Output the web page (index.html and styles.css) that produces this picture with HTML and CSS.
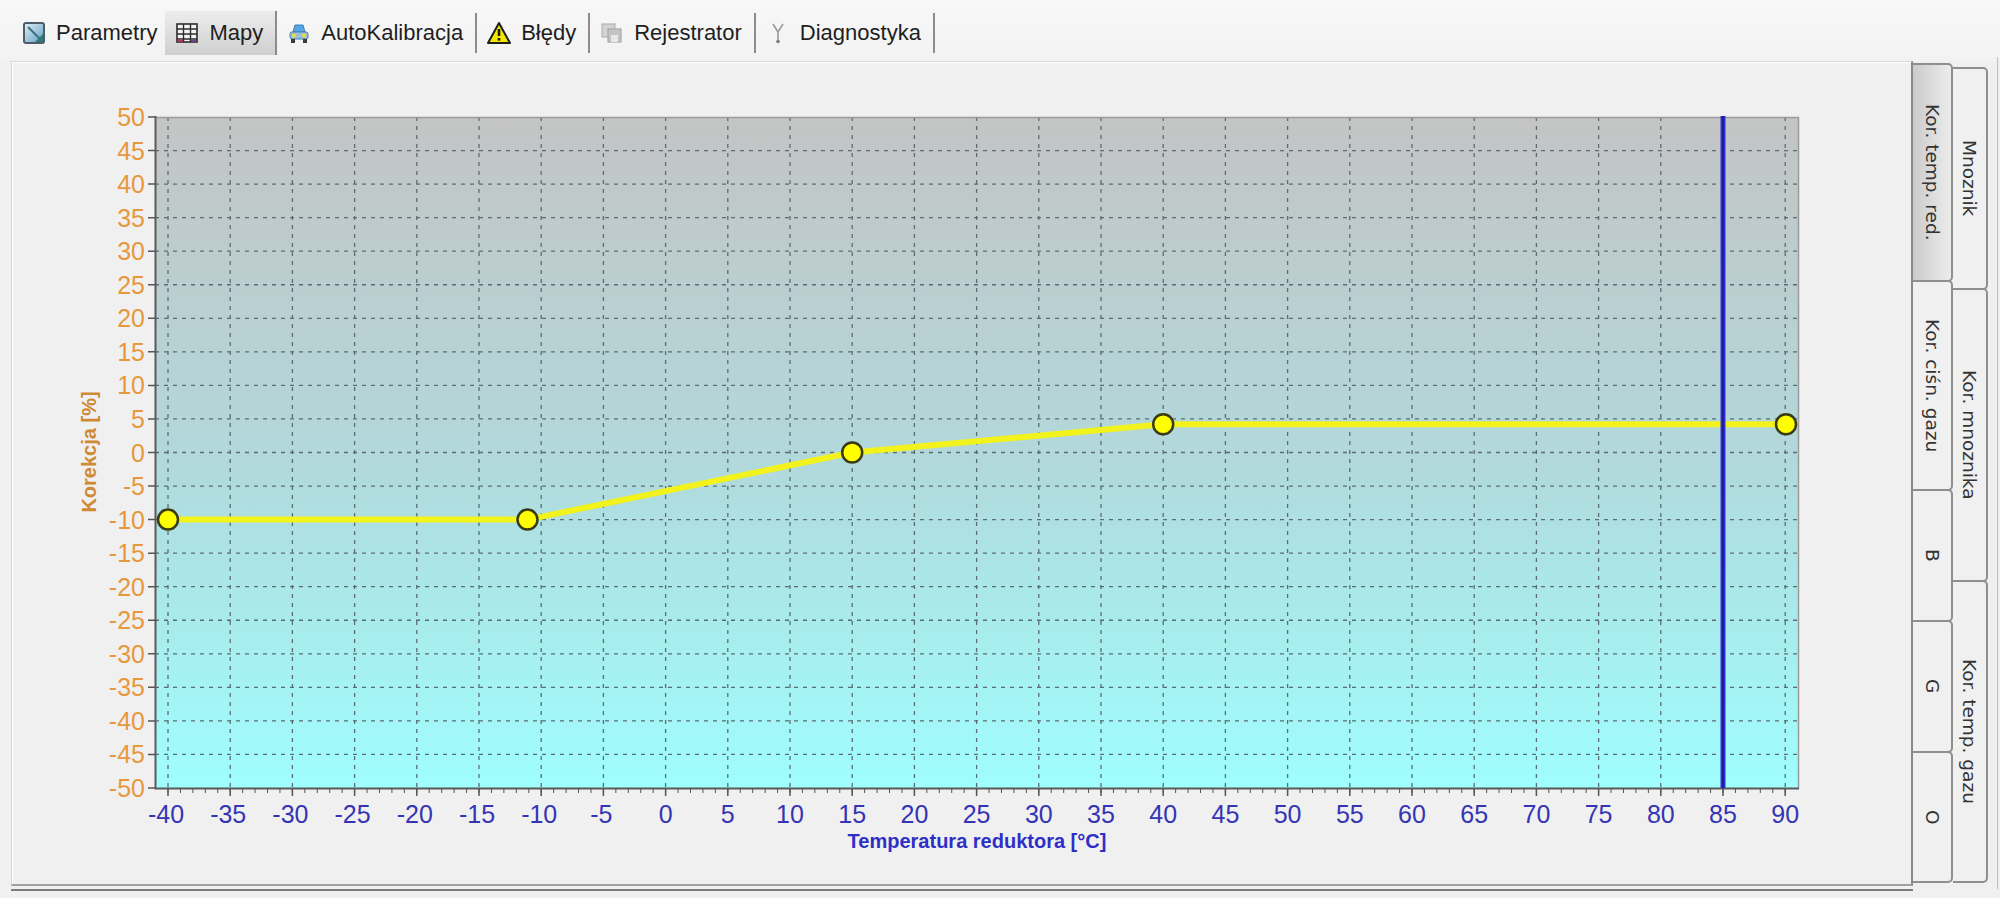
FILE: index.html
```html
<!DOCTYPE html>
<html lang="pl">
<head>
<meta charset="utf-8">
<title>Mapy</title>
<link rel="stylesheet" href="styles.css">
</head>
<body>
<div class="tabbar">
  <div class="tab first">
    <svg viewBox="0 0 24 24"><defs><linearGradient id="gp" x1="0" y1="0" x2="1" y2="1"><stop offset="0" stop-color="#e2f1f8"/><stop offset="1" stop-color="#5d9fbf"/></linearGradient></defs><rect x="2" y="2" width="20" height="20" rx="2" fill="url(#gp)" stroke="#4a5d69" stroke-width="2"/><path d="M13 21 L21 13 L21 21 Z" fill="#2f7c78"/><path d="M6 6 L18 18" stroke="#3e6e7e" stroke-width="2"/></svg>
    <span>Parametry</span>
  </div>
  <div class="tab active">
    <svg viewBox="0 0 24 24"><rect x="2" y="3" width="20" height="18" fill="#f4f4f4" stroke="#2c2c2c" stroke-width="1.6"/><path d="M2 8H22M2 13H22M2 18H22M8.5 3V21M15.5 3V21" stroke="#2c2c2c" stroke-width="1.4"/><rect x="3" y="18.5" width="5" height="2" fill="#c0306a"/><rect x="16" y="18.5" width="5" height="2" fill="#7040a0"/></svg>
    <span>Mapy</span>
  </div>
  <div class="tab">
    <svg viewBox="0 0 24 24"><path d="M6 11 L8 4 H16 L18 11 Z" fill="#56a6e6" stroke="#3a7cb8" stroke-width="1"/><rect x="3" y="11" width="18" height="7" rx="2" fill="#9cc0d8" stroke="#4a7ea8" stroke-width="1"/><circle cx="7" cy="14.5" r="2" fill="#e8e030"/><circle cx="17" cy="14.5" r="2" fill="#e8e030"/><rect x="4" y="18" width="4" height="4" fill="#3a3a3a"/><rect x="16" y="18" width="4" height="4" fill="#3a3a3a"/></svg>
    <span>AutoKalibracja</span>
  </div>
  <div class="tab">
    <svg viewBox="0 0 24 24"><path d="M12 2 L23 22 H1 Z" fill="#f3e600" stroke="#1e1e1e" stroke-width="2" stroke-linejoin="round"/><path d="M12 8 V15" stroke="#1e1e1e" stroke-width="2.6"/><rect x="10.7" y="17" width="2.6" height="2.6" fill="#1e1e1e"/></svg>
    <span>Błędy</span>
  </div>
  <div class="tab">
    <svg viewBox="0 0 24 24"><rect x="2" y="3" width="13" height="13" fill="#d2d2d2" stroke="#b4b4b4" stroke-width="1.2"/><rect x="8" y="8" width="13" height="13" fill="#c4c4c4" stroke="#a8a8a8" stroke-width="1.2"/><rect x="11" y="14" width="7" height="7" fill="#e8e8e8"/></svg>
    <span>Rejestrator</span>
  </div>
  <div class="tab">
    <svg viewBox="0 0 24 24"><path d="M7 3 L12 11 L17 3 M12 11 V19" stroke="#9a9a9a" stroke-width="1.6" fill="none"/><circle cx="12" cy="20.5" r="1.8" fill="#7a7a7a"/></svg>
    <span>Diagnostyka</span>
  </div>
</div>

<div class="main">
  <div class="panelwrap">
    <div class="panel">
      <svg class="chart" width="1899" height="822" viewBox="12 62 1899 822">
        <defs>
          <linearGradient id="bg" x1="0" y1="0" x2="0" y2="1">
            <stop offset="0" stop-color="#c4c4c4"/>
            <stop offset="0.5" stop-color="#b2d8db"/>
            <stop offset="1" stop-color="#9ffefe"/>
          </linearGradient>
        </defs>
        <rect x="155" y="117" width="1644" height="671" fill="url(#bg)"/>
        <path class="grid" d="M155 150.55H1799M155 184.1H1799M155 217.65H1799M155 251.2H1799M155 284.75H1799M155 318.3H1799M155 351.85H1799M155 385.4H1799M155 418.95H1799M155 452.5H1799M155 486.05H1799M155 519.6H1799M155 553.15H1799M155 586.7H1799M155 620.25H1799M155 653.8H1799M155 687.35H1799M155 720.9H1799M155 754.45H1799"/>
        <path class="grid" d="M168 117V788M230.2 117V788M292.4 117V788M354.6 117V788M416.8 117V788M479 117V788M541.2 117V788M603.4 117V788M665.6 117V788M727.8 117V788M790 117V788M852.2 117V788M914.4 117V788M976.6 117V788M1038.8 117V788M1101 117V788M1163.2 117V788M1225.4 117V788M1287.6 117V788M1349.8 117V788M1412 117V788M1474.2 117V788M1536.4 117V788M1598.6 117V788M1660.8 117V788M1723 117V788M1785.2 117V788"/>
        <path class="frame-light" d="M155 117.5H1798.5V788"/>
        <path class="frame-dark" d="M155.5 116V788.5H1799"/>
        <line class="tick" x1="151.5" y1="116.25" x2="151.5" y2="790" stroke-width="7" stroke-dasharray="1.5 32.05"/>
        <line class="tick" x1="167.25" y1="792" x2="1788" y2="792" stroke-width="8" stroke-dasharray="1.5 60.7"/>
        <line class="tick" x1="167.5" y1="790.5" x2="1788" y2="790.5" stroke-width="5" stroke-dasharray="1 11.44"/>

        <polyline class="curve" points="168,519.6 527.5,519.6 852.2,452.5 1163.2,424.3 1786,424.3"/>
        <line class="marker" x1="1723" y1="116" x2="1723" y2="788"/>
        <line class="marker-core" x1="1723" y1="116" x2="1723" y2="788"/>
        <g class="pts">
          <circle cx="168" cy="519.6" r="10"/>
          <circle cx="527.5" cy="519.6" r="10"/>
          <circle cx="852.2" cy="452.5" r="10"/>
          <circle cx="1163.2" cy="424.3" r="10"/>
          <circle cx="1786" cy="424.3" r="10"/>
        </g>

        <g class="ylab">
          <text x="145" y="117">50</text>
          <text x="145" y="150.55">45</text>
          <text x="145" y="184.1">40</text>
          <text x="145" y="217.65">35</text>
          <text x="145" y="251.2">30</text>
          <text x="145" y="284.75">25</text>
          <text x="145" y="318.3">20</text>
          <text x="145" y="351.85">15</text>
          <text x="145" y="385.4">10</text>
          <text x="145" y="418.95">5</text>
          <text x="145" y="452.5">0</text>
          <text x="145" y="486.05">-5</text>
          <text x="145" y="519.6">-10</text>
          <text x="145" y="553.15">-15</text>
          <text x="145" y="586.7">-20</text>
          <text x="145" y="620.25">-25</text>
          <text x="145" y="653.8">-30</text>
          <text x="145" y="687.35">-35</text>
          <text x="145" y="720.9">-40</text>
          <text x="145" y="754.45">-45</text>
          <text x="145" y="788">-50</text>
        </g>
        <g class="xlab">
          <text x="166" y="814">-40</text>
          <text x="228.2" y="814">-35</text>
          <text x="290.4" y="814">-30</text>
          <text x="352.6" y="814">-25</text>
          <text x="414.8" y="814">-20</text>
          <text x="477" y="814">-15</text>
          <text x="539.2" y="814">-10</text>
          <text x="601.4" y="814">-5</text>
          <text x="665.6" y="814">0</text>
          <text x="727.8" y="814">5</text>
          <text x="790" y="814">10</text>
          <text x="852.2" y="814">15</text>
          <text x="914.4" y="814">20</text>
          <text x="976.6" y="814">25</text>
          <text x="1038.8" y="814">30</text>
          <text x="1101" y="814">35</text>
          <text x="1163.2" y="814">40</text>
          <text x="1225.4" y="814">45</text>
          <text x="1287.6" y="814">50</text>
          <text x="1349.8" y="814">55</text>
          <text x="1412" y="814">60</text>
          <text x="1474.2" y="814">65</text>
          <text x="1536.4" y="814">70</text>
          <text x="1598.6" y="814">75</text>
          <text x="1660.8" y="814">80</text>
          <text x="1723" y="814">85</text>
          <text x="1785.2" y="814">90</text>
        </g>
        <text class="xtitle" x="977" y="841">Temperatura reduktora [°C]</text>
        <text class="ytitle" x="0" y="0" transform="translate(89 452) rotate(-90)">Korekcja [%]</text>
      </svg>
    </div>
  </div>
  <div class="vcol inner">
    <div class="vtab sel t-red"><span>Kor. temp. red.</span></div>
    <div class="vtab t-cisn"><span>Kor. ciśn. gazu</span></div>
    <div class="vtab t-b"><span>B</span></div>
    <div class="vtab t-g"><span>G</span></div>
    <div class="vtab t-o"><span>O</span></div>
  </div>
  <div class="vcol outer">
    <div class="vtab t-mn"><span>Mnoznik</span></div>
    <div class="vtab t-kmn"><span>Kor. mnoznika</span></div>
    <div class="vtab t-ktg"><span>Kor. temp. gazu</span></div>
  </div>
  <div class="edge"></div>
</div>
</body>
</html>
```

FILE: styles.css
```css
html, body {
  margin: 0;
  padding: 0;
}
body {
  width: 2000px;
  height: 898px;
  overflow: hidden;
  background: #f0f0f0;
  font-family: "Liberation Sans", Arial, sans-serif;
}

/* top tab bar */
.tabbar {
  height: 61px;
  box-sizing: border-box;
  display: flex;
  align-items: flex-start;
  padding-left: 12px;
  background: linear-gradient(#f8f8f8, #f2f2f2);
}
.tab {
  display: flex;
  align-items: center;
  gap: 10px;
  height: 40px;
  margin-top: 13px;
  padding: 0 12px 0 10px;
  font-size: 22px;
  color: #1e1e1e;
  border-right: 2px solid #8c8c8c;
}
.tab.first {
  border-right: none;
  padding-right: 8px;
}
.tab.active {
  height: 44px;
  margin-top: 11px;
  background: linear-gradient(#ededed, #cfcfcf);
}
.tab svg {
  width: 24px;
  height: 24px;
  flex: none;
}

/* main area */
.main {
  display: flex;
  padding-left: 11px;
}
.panelwrap {
  width: 1902px;
  padding-bottom: 3px;
  border-bottom: 2px solid #7c7c7c;
}
.panel {
  height: 825px;
  box-sizing: border-box;
  border: 1px solid #d6d6d6;
  border-right: 2px solid #8a8a8a;
  border-bottom: 2px solid #a0a0a0;
  background: #f0f0f0;
  box-shadow: inset 1px 1px 0 #ffffff;
}
.chart {
  display: block;
}

/* chart elements */
.grid {
  fill: none;
  stroke: #5a6e72;
  stroke-width: 1.3;
  stroke-dasharray: 4 5;
}
.frame-light {
  fill: none;
  stroke: #9a9a9a;
  stroke-width: 1.5;
}
.frame-dark {
  fill: none;
  stroke: #5a5a5a;
  stroke-width: 2;
}
.tick {
  stroke: #555555;
}
.curve {
  fill: none;
  stroke: #f2f21c;
  stroke-width: 6;
  stroke-linejoin: round;
  stroke-linecap: round;
}
.marker {
  stroke: #3030d4;
  stroke-width: 5;
}
.marker-core {
  stroke: #1c1c9c;
  stroke-width: 2;
}
.pts circle {
  fill: #ffff00;
  stroke: #3a3a14;
  stroke-width: 2.5;
}
.ylab text {
  font-family: "Liberation Sans", Arial, sans-serif;
  font-size: 25px;
  fill: #e8983c;
  text-anchor: end;
  dominant-baseline: central;
}
.xlab text {
  font-family: "Liberation Sans", Arial, sans-serif;
  font-size: 25px;
  fill: #3434b4;
  text-anchor: middle;
  dominant-baseline: central;
}
.xtitle {
  font-family: "Liberation Sans", Arial, sans-serif;
  font-size: 20px;
  font-weight: bold;
  fill: #2f2fc8;
  text-anchor: middle;
  dominant-baseline: central;
}
.ytitle {
  font-family: "Liberation Sans", Arial, sans-serif;
  font-size: 20px;
  font-weight: bold;
  fill: #cf8a36;
  text-anchor: middle;
  dominant-baseline: central;
}

/* vertical tabs */
.vcol {
  display: flex;
  flex-direction: column;
}
.vcol.inner {
  width: 40px;
  padding-top: 2px;
}
.vcol.outer {
  width: 35px;
  padding-top: 6px;
}
.vtab {
  box-sizing: border-box;
  border: 2px solid #8f8f8f;
  border-left: none;
  border-radius: 0 5px 5px 0;
  display: flex;
  align-items: center;
  justify-content: center;
  background: #f0f0f0;
  font-family: "DejaVu Sans", Verdana, sans-serif;
  font-size: 18.5px;
  color: #333333;
}
.vtab + .vtab {
  margin-top: -2px;
}
.vtab span {
  writing-mode: vertical-rl;
  white-space: nowrap;
}
.vtab.sel {
  background: linear-gradient(to right, #cbcbcb, #ececec);
}
.t-red { height: 219px; }
.t-cisn { height: 211px; }
.t-b { height: 133px; }
.t-g { height: 133px; }
.t-o { height: 132px; }
.t-mn { height: 223px; }
.t-kmn { height: 294px; }
.t-ktg { height: 303px; }
.edge {
  width: 9px;
  height: 832px;
  margin-top: -4px;
  border-right: 1px solid #bdbdbd;
}
```
